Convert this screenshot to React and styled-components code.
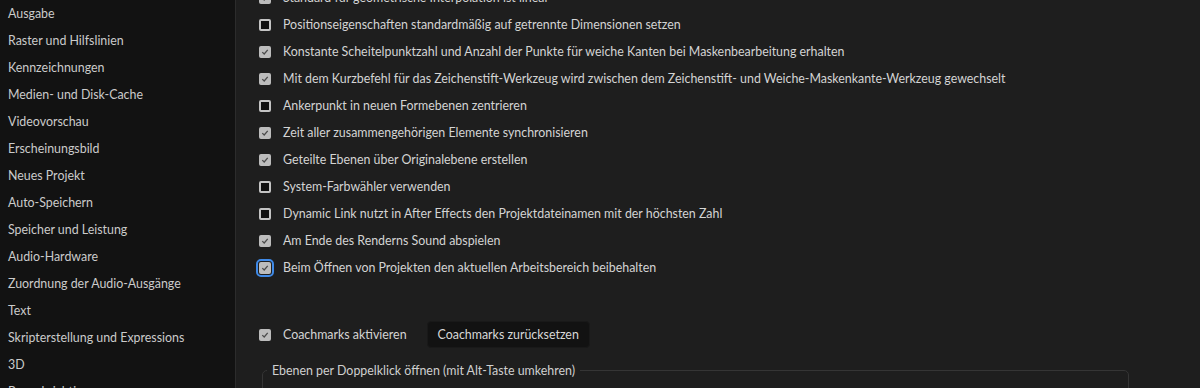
import React from 'react';
import styled, { createGlobalStyle } from 'styled-components';

const GlobalStyle = createGlobalStyle`
  html, body {
    margin: 0;
    padding: 0;
    background: #1e1e1e;
    overflow: hidden;
  }
  * { box-sizing: border-box; }
`;

const Window = styled.div`
  display: flex;
  width: 1200px;
  height: 388px;
  overflow: hidden;
  font-family: Lato, "Liberation Sans", sans-serif;
  font-size: 12.4px;
`;

const Sidebar = styled.nav`
  width: 236px;
  flex: none;
  background: #121212;
  border-right: 1px solid #2c2c2c;
  display: flex;
  flex-direction: column;
`;

const NavItem = styled.div`
  height: 27px;
  line-height: 27px;
  padding-left: 8px;
  color: #cbcbcb;
  white-space: nowrap;
`;

const Main = styled.main`
  flex: 1;
  background: #1e1e1e;
  padding-left: 23px;
  padding-right: 71px;
`;

const List = styled.div`
  margin-top: -16px;
  display: flex;
  flex-direction: column;
`;

const Row = styled.label`
  height: 27px;
  display: flex;
  align-items: center;
  gap: 12px;
  color: #d4d4d4;
  white-space: nowrap;
`;

const Box = styled.span`
  position: relative;
  width: 12px;
  height: 12px;
  flex: none;
  border-radius: 2px;
  display: flex;
  align-items: center;
  justify-content: center;
  background: ${p => (p.$checked ? '#bcbcbc' : '#101010')};
  border: 2px solid ${p => (p.$checked ? '#bcbcbc' : '#c4c4c4')};
  ${p => p.$focus && `
    &::after {
      content: '';
      position: absolute;
      inset: -5px;
      border: 2px solid #3f8ae8;
      border-radius: 5px;
    }
  `}
`;

const Check = () => (
  <svg width="10" height="10" viewBox="0 0 10 10">
    <path d="M1.6 5.2 L4 7.5 L8.4 2.4" fill="none" stroke="#4a4a4a" strokeWidth="1.6" />
  </svg>
);

const Checkbox = ({ checked, focus }) => (
  <Box $checked={checked} $focus={focus}>{checked && <Check />}</Box>
);

const CoachRow = styled.div`
  margin-top: 40px;
  height: 27px;
  display: flex;
  align-items: center;
  gap: 20px;
`;

const Button = styled.button`
  height: 27px;
  padding: 0 10px;
  background: #121212;
  border: 1px solid #191919;
  border-radius: 4px;
  color: #d8d8d8;
  font-family: inherit;
  font-size: 12.4px;
`;

const Fieldset = styled.fieldset`
  margin: 15px 0 0 3px;
  padding: 0;
  height: 60px;
  border: 1px solid #353535;
  border-radius: 5px;
`;

const Legend = styled.legend`
  margin-left: 4px;
  padding: 0 5px;
  color: #d0d0d0;
  font-size: 12.4px;
`;

const nav = [
  'Ausgabe', 'Raster und Hilfslinien', 'Kennzeichnungen', 'Medien- und Disk-Cache',
  'Videovorschau', 'Erscheinungsbild', 'Neues Projekt', 'Auto-Speichern',
  'Speicher und Leistung', 'Audio-Hardware', 'Zuordnung der Audio-Ausgänge', 'Text',
  'Skripterstellung und Expressions', '3D', 'Benachrichtigungen',
];

const options = [
  ['Standard für geometrische Interpolation ist linear', true],
  ['Positionseigenschaften standardmäßig auf getrennte Dimensionen setzen', false],
  ['Konstante Scheitelpunktzahl und Anzahl der Punkte für weiche Kanten bei Maskenbearbeitung erhalten', true],
  ['Mit dem Kurzbefehl für das Zeichenstift-Werkzeug wird zwischen dem Zeichenstift- und Weiche-Maskenkante-Werkzeug gewechselt', true],
  ['Ankerpunkt in neuen Formebenen zentrieren', false],
  ['Zeit aller zusammengehörigen Elemente synchronisieren', true],
  ['Geteilte Ebenen über Originalebene erstellen', true],
  ['System-Farbwähler verwenden', false],
  ['Dynamic Link nutzt in After Effects den Projektdateinamen mit der höchsten Zahl', false],
  ['Am Ende des Renderns Sound abspielen', true],
  ['Beim Öffnen von Projekten den aktuellen Arbeitsbereich beibehalten', true, true],
];

export default function App() {
  return (
    <>
      <GlobalStyle />
      <Window>
        <Sidebar>
          {nav.map(n => <NavItem key={n}>{n}</NavItem>)}
        </Sidebar>
        <Main>
          <List>
            {options.map(([text, checked, focus]) => (
              <Row key={text}>
                <Checkbox checked={checked} focus={focus} />
                {text}
              </Row>
            ))}
          </List>
          <CoachRow>
            <Row as="div">
              <Checkbox checked />
              Coachmarks aktivieren
            </Row>
            <Button>Coachmarks zurücksetzen</Button>
          </CoachRow>
          <Fieldset>
            <Legend>Ebenen per Doppelklick öffnen (mit Alt-Taste umkehren)</Legend>
          </Fieldset>
        </Main>
      </Window>
    </>
  );
}
